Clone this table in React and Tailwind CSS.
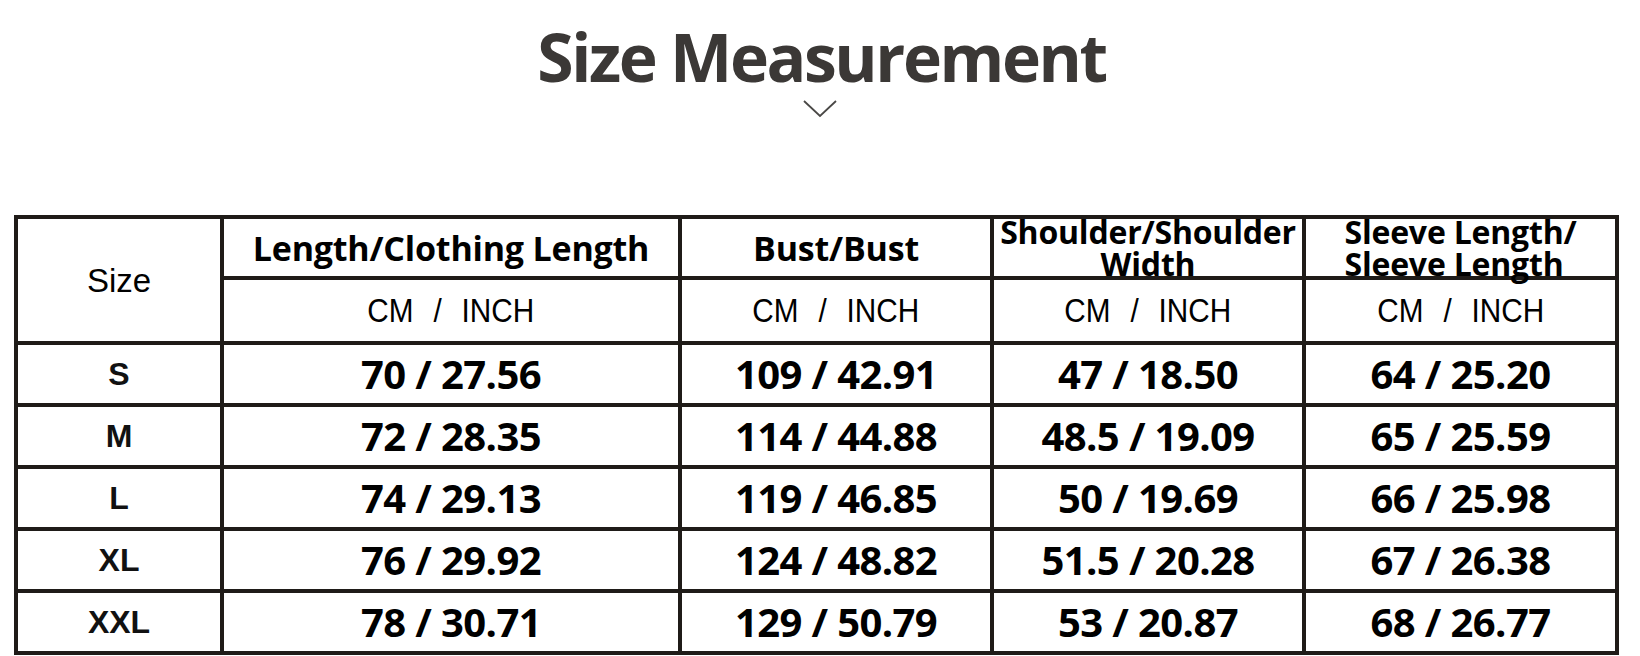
import React from "react";

const rows = [
  ["S", "70 / 27.56", "109 / 42.91", "47 / 18.50", "64 / 25.20"],
  ["M", "72 / 28.35", "114 / 44.88", "48.5 / 19.09", "65 / 25.59"],
  ["L", "74 / 29.13", "119 / 46.85", "50 / 19.69", "66 / 25.98"],
  ["XL", "76 / 29.92", "124 / 48.82", "51.5 / 20.28", "67 / 26.38"],
  ["XXL", "78 / 30.71", "129 / 50.79", "53 / 20.87", "68 / 26.77"],
];

const headCls =
  "bg-white flex items-center justify-center text-center font-['Open_Sans',sans-serif] font-bold text-[34px] leading-none text-black tracking-[-0.2px]";
const head2Cls =
  "bg-white flex items-center justify-center font-['Open_Sans',sans-serif] font-bold text-[32px] leading-[32px] text-black tracking-[-0.2px]";
const unitCls =
  "bg-white flex items-center justify-center font-['Liberation_Sans',Arial,sans-serif] text-[33px] leading-none text-black";
const sizeCls =
  "bg-white flex items-center justify-center font-['Liberation_Sans',Arial,sans-serif] font-bold text-[32px] leading-none text-[#111]";
const valCls =
  "bg-white flex items-center justify-center font-['Open_Sans',sans-serif] font-bold text-[40px] leading-none text-black tracking-[-0.6px]";

function Unit() {
  return (
    <div className={unitCls}>
      <span className="inline-block whitespace-nowrap scale-x-[0.9] [word-spacing:13px]">
        CM / INCH
      </span>
    </div>
  );
}

export default function App() {
  return (
    <div className="w-[1640px] h-[656px] bg-white overflow-hidden flex flex-col">
      <div className="flex flex-col items-center pt-[23px]">
        <h1 className="font-['Open_Sans',sans-serif] font-bold text-[66px] leading-none text-[#3b3836] tracking-[-2.4px] pl-[3px]">
          Size Measurement
        </h1>
        <svg
          className="mt-[10px]"
          width="36"
          height="19"
          viewBox="0 0 36 19"
          fill="none"
        >
          <path d="M2 2 L18 17 L34 2" stroke="#4a4846" strokeWidth="1.8" />
        </svg>
      </div>
      <div className="mt-[97px] ml-[14px] w-[1605px] grid grid-cols-[202px_454px_308px_308px_309px] grid-rows-[57px_61px_58px_58px_58px_58px_58px] gap-[4px] p-[4px] bg-[#1f1b18]">
        <div className={"row-span-2 " + unitCls}>Size</div>
        <div className={headCls}>Length/Clothing Length</div>
        <div className={headCls}>Bust/Bust</div>
        <div className={head2Cls}>
          <div className="relative z-10 text-center">
            Shoulder/Shoulder
            <br />
            Width
          </div>
        </div>
        <div className={head2Cls}>
          <div className="relative z-10 text-left">
            Sleeve Length/
            <br />
            Sleeve Length
          </div>
        </div>
        <Unit />
        <Unit />
        <Unit />
        <Unit />
        {rows.map((r) => (
          <React.Fragment key={r[0]}>
            <div className={sizeCls}>{r[0]}</div>
            <div className={valCls}>{r[1]}</div>
            <div className={valCls}>{r[2]}</div>
            <div className={valCls}>{r[3]}</div>
            <div className={valCls}>{r[4]}</div>
          </React.Fragment>
        ))}
      </div>
    </div>
  );
}
